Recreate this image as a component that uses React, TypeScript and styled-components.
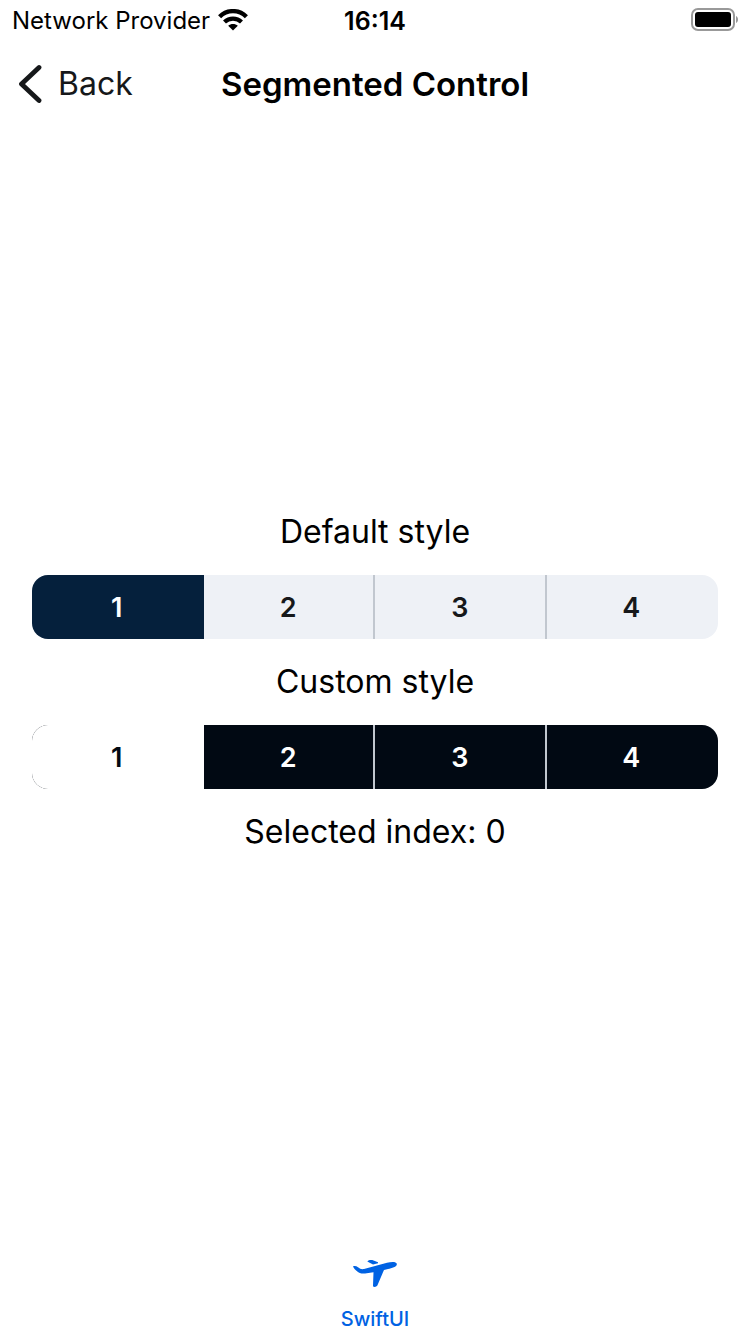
import React, { useState } from "react";
import styled, { createGlobalStyle } from "styled-components";

const GlobalStyle = createGlobalStyle`
  * { box-sizing: border-box; }
  body {
    margin: 0;
    background: #fff;
    color: #000;
    font-family: Inter, "Liberation Sans", sans-serif;
  }
`;

const Screen = styled.div`
  display: flex;
  flex-direction: column;
  min-height: 100vh;
`;

const StatusBar = styled.div`
  display: grid;
  grid-template-columns: 1fr auto 1fr;
  align-items: center;
  height: 42px;
  padding: 0 12px;
  font-size: 24px;
  line-height: 42px;
`;

const Carrier = styled.div`
  display: flex;
  align-items: center;
  gap: 8px;
  white-space: nowrap;
`;

const Time = styled.div`
  font-size: 25px;
  font-weight: 600;
`;

const BatteryIcon = styled.svg`
  justify-self: end;
`;

const NavBar = styled.header`
  display: grid;
  grid-template-columns: 1fr auto 1fr;
  align-items: center;
  height: 84px;
  padding: 0 18px;
`;

const BackButton = styled.button`
  display: flex;
  align-items: center;
  justify-self: start;
  gap: 16px;
  padding: 0;
  border: 0;
  background: none;
  color: #16181a;
  font: inherit;
  font-size: 32px;
  line-height: 42px;
`;

const Title = styled.h1`
  margin: 0;
  font-size: 33px;
  font-weight: 600;
  line-height: 42px;
`;

const Content = styled.main`
  display: flex;
  flex: 1;
  flex-direction: column;
  justify-content: center;
  gap: 22px;
  padding: 2px 32px 0;
`;

const Caption = styled.div`
  font-size: 32px;
  line-height: 42px;
  text-align: center;
`;

type Look = "standard" | "custom";

const looks = {
  standard: { back: "#eef1f6", text: "#16181a", onBack: "#05203c", onText: "#fff", line: "#c1c7cf" },
  custom: { back: "#010913", text: "#fff", onBack: "#fff", onText: "#010913", line: "#c1c7cf" },
};

const Track = styled.div<{ $look: Look }>`
  display: flex;
  height: 64px;
  overflow: hidden;
  border-radius: 16px;
  background: ${(p) => looks[p.$look].back};
`;

const Segment = styled.label<{ $look: Look; $on: boolean; $line: boolean }>`
  display: flex;
  flex: 1;
  align-items: center;
  justify-content: center;
  padding-top: 2px;
  border-right: 2px solid ${(p) => (p.$line ? looks[p.$look].line : "transparent")};
  background: ${(p) => (p.$on ? looks[p.$look].onBack : "transparent")};
  color: ${(p) => (p.$on ? looks[p.$look].onText : looks[p.$look].text)};
  font-size: 27px;
  font-weight: 600;
  line-height: 32px;
  cursor: pointer;
`;

const Radio = styled.input`
  position: absolute;
  width: 1px;
  height: 1px;
  margin: 0;
  opacity: 0;
`;

const TabBar = styled.nav`
  display: flex;
  justify-content: center;
  height: 98px;
  padding-top: 22px;
`;

const Tab = styled.a`
  display: flex;
  flex-direction: column;
  align-items: center;
  gap: 18px;
  color: #0062e3;
  font-size: 20px;
  font-weight: 500;
  line-height: 26px;
  text-decoration: none;
`;

const segments = ["1", "2", "3", "4"];

interface SegmentedControlProps {
  name: string;
  label: string;
  look: Look;
  selected: number;
  onSelect: (index: number) => void;
}

function SegmentedControl({ name, label, look, selected, onSelect }: SegmentedControlProps) {
  return (
    <Track role="radiogroup" aria-label={label} $look={look}>
      {segments.map((text, i) => (
        <Segment
          key={text}
          $look={look}
          $on={i === selected}
          $line={i < segments.length - 1 && i !== selected && i + 1 !== selected}
        >
          <Radio type="radio" name={name} checked={i === selected} onChange={() => onSelect(i)} />
          {text}
        </Segment>
      ))}
    </Track>
  );
}

export default function App() {
  const [selected, setSelected] = useState(0);
  return (
    <Screen>
      <GlobalStyle />
      <StatusBar>
        <Carrier>
          Network Provider
          <svg width="30" height="24" viewBox="0 0 30 24" aria-hidden="true">
            <g fill="none" stroke="#000" strokeWidth="4.300">
              <path d="M1.600 7.700C9 .2 21 .2 28.400 7.700" />
              <path d="M6.500 13C11.200 8.600 18.800 8.600 23.500 13" />
            </g>
            <path d="M15 21.600l-4.800-4.800c2.600-2.400 7-2.400 9.600 0z" />
          </svg>
        </Carrier>
        <Time>16:14</Time>
        <BatteryIcon width="47" height="26" viewBox="0 0 47 26" aria-hidden="true">
          <rect x="1" y="1" width="42" height="21" rx="6" fill="none" stroke="#999" strokeWidth="2" />
          <rect x="4" y="4" width="36" height="15" rx="3" />
          <path d="M45 8c2.700 1 2.700 6 0 7z" fill="#999" />
        </BatteryIcon>
      </StatusBar>
      <NavBar>
        <BackButton type="button">
          <svg width="24" height="40" viewBox="0 0 24 40" aria-hidden="true">
            <path
              d="M21 3.500L3.500 20L21 36.500"
              fill="none"
              stroke="#16181a"
              strokeWidth="4.800"
              strokeLinecap="round"
              strokeLinejoin="round"
            />
          </svg>
          Back
        </BackButton>
        <Title>Segmented Control</Title>
      </NavBar>
      <Content>
        <Caption>Default style</Caption>
        <SegmentedControl name="default" label="Default style" look="standard" selected={selected} onSelect={setSelected} />
        <Caption>Custom style</Caption>
        <SegmentedControl name="custom" label="Custom style" look="custom" selected={selected} onSelect={setSelected} />
        <Caption>Selected index: {selected}</Caption>
      </Content>
      <TabBar>
        <Tab href="#swiftui">
          <svg width="46" height="30" viewBox="0 0 46 30" aria-hidden="true">
            <path
              fill="#0062e3"
              d="M1 8.500C2.500 7.600 4.500 8.200 6 9.200C8 10.800 9.500 11.500 12 11L35 4.800C39 3.800 44 3.200 44.800 5.800C45.300 8.800 40 10.100 36 10.900L32 11.900L26 26C25.300 28.200 24 29 22.500 29C21 29 20.900 28.200 21 27.500L21.500 14.200L13 15.500C9.500 15.900 7 15 5 13.200C3.500 12 2 10.500 1 8.500Z"
            />
            <path fill="#0062e3" d="M15.300 3.600C17 1.800 19.500 1.900 21.500 2.500L26 4.300L26 5.200L21 6.600Z" />
          </svg>
          SwiftUI
        </Tab>
      </TabBar>
    </Screen>
  );
}
